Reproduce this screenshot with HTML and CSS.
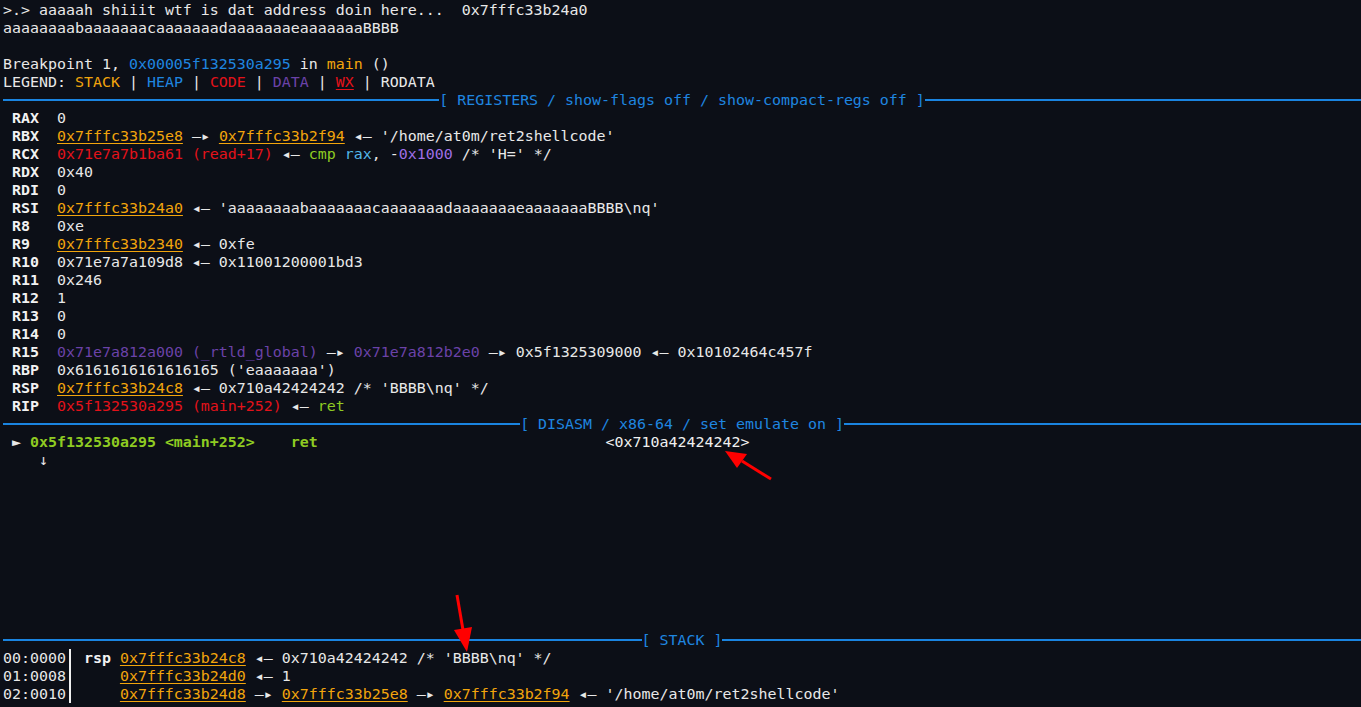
FILE: index.html
```html
<!DOCTYPE html>
<html lang="en">

<head>
    <meta charset="UTF-8">
    <meta name="viewport" content="width=device-width, initial-scale=1.0">
    <title>pwndbg</title>

    <link rel="stylesheet" href="styles.css">
</head>

<body>
    <div class="term">
        <div class="ln">&gt;.&gt; aaaaah shiiit wtf is dat address doin here...  0x7fffc33b24a0</div>
        <div class="ln">aaaaaaaabaaaaaaacaaaaaaadaaaaaaaeaaaaaaaBBBB</div>
        <div class="ln"> </div>
        <div class="ln">Breakpoint 1, <span class="c-blue">0x00005f132530a295</span> in <span class="c-orange">main</span> ()</div>
        <div class="ln">LEGEND: <span class="c-orange">STACK</span> | <span class="c-blue">HEAP</span> | <span class="c-red">CODE</span> | <span class="c-purple">DATA</span> | <span class="c-red u">WX</span> | RODATA</div>

        <div class="sep"><span class="sep-line"></span><span class="sep-title">[ REGISTERS / show-flags off / show-compact-regs off ]</span><span class="sep-line"></span></div>

        <!-- registers -->
        <div class="ln"> <b>RAX</b>  0</div>
        <div class="ln"> <b>RBX</b>  <span class="c-orange u">0x7fffc33b25e8</span> —▸ <span class="c-orange u">0x7fffc33b2f94</span> ◂— '/home/at0m/ret2shellcode'</div>
        <div class="ln"> <b>RCX</b>  <span class="c-red">0x71e7a7b1ba61 (read+17)</span> ◂— <span class="c-green">cmp</span> <span class="c-cyan">rax</span>, -<span class="c-violet">0x1000</span> /* 'H=' */</div>
        <div class="ln"> <b>RDX</b>  0x40</div>
        <div class="ln"> <b>RDI</b>  0</div>
        <div class="ln"> <b>RSI</b>  <span class="c-orange u">0x7fffc33b24a0</span> ◂— 'aaaaaaaabaaaaaaacaaaaaaadaaaaaaaeaaaaaaaBBBB\nq'</div>
        <div class="ln"> <b>R8 </b>  0xe</div>
        <div class="ln"> <b>R9 </b>  <span class="c-orange u">0x7fffc33b2340</span> ◂— 0xfe</div>
        <div class="ln"> <b>R10</b>  0x71e7a7a109d8 ◂— 0x11001200001bd3</div>
        <div class="ln"> <b>R11</b>  0x246</div>
        <div class="ln"> <b>R12</b>  1</div>
        <div class="ln"> <b>R13</b>  0</div>
        <div class="ln"> <b>R14</b>  0</div>
        <div class="ln"> <b>R15</b>  <span class="c-purple">0x71e7a812a000 (_rtld_global)</span> —▸ <span class="c-purple">0x71e7a812b2e0</span> —▸ 0x5f1325309000 ◂— 0x10102464c457f</div>
        <div class="ln"> <b>RBP</b>  0x6161616161616165 ('eaaaaaaa')</div>
        <div class="ln"> <b>RSP</b>  <span class="c-orange u">0x7fffc33b24c8</span> ◂— 0x710a42424242 /* 'BBBB\nq' */</div>
        <div class="ln"> <b>RIP</b>  <span class="c-red">0x5f132530a295 (main+252)</span> ◂— <span class="c-green">ret</span></div>

        <div class="sep"><span class="sep-line"></span><span class="sep-title">[ DISASM / x86-64 / set emulate on ]</span><span class="sep-line"></span></div>

        <!-- disasm -->
        <div class="ln"> ► <b class="c-green">0x5f132530a295 &lt;main+252&gt;    ret</b>                                <span class="c-white">&lt;0x710a42424242&gt;</span></div>
        <div class="ln">    ↓</div>
        <div class="ln"> </div>
        <div class="ln"> </div>
        <div class="ln"> </div>
        <div class="ln"> </div>
        <div class="ln"> </div>
        <div class="ln"> </div>
        <div class="ln"> </div>
        <div class="ln"> </div>
        <div class="ln"> </div>

        <div class="sep sep-stack"><span class="sep-line"></span><span class="sep-title">[ STACK ]</span><span class="sep-line"></span></div>

        <!-- stack -->
        <div class="ln">00:0000<span class="vbar"></span> <b>rsp</b> <span class="c-orange u">0x7fffc33b24c8</span> ◂— 0x710a42424242 /* 'BBBB\nq' */</div>
        <div class="ln">01:0008<span class="vbar"></span>     <span class="c-orange u">0x7fffc33b24d0</span> ◂— 1</div>
        <div class="ln">02:0010<span class="vbar"></span>     <span class="c-orange u">0x7fffc33b24d8</span> —▸ <span class="c-orange u">0x7fffc33b25e8</span> —▸ <span class="c-orange u">0x7fffc33b2f94</span> ◂— '/home/at0m/ret2shellcode'</div>
    </div>

    <!-- red annotation arrows -->
    <svg class="marks" width="1361" height="707" viewBox="0 0 1361 707">
        <line x1="771" y1="479" x2="742" y2="461" stroke="#ff0000" stroke-width="3" />
        <polygon points="725,451 747,454 737,468" fill="#ff0000" />
        <line x1="457" y1="595" x2="463" y2="630" stroke="#ff0000" stroke-width="3" />
        <polygon points="467,652 472,627 454,630" fill="#ff0000" />
    </svg>
</body>

</html>
```

FILE: styles.css
```css
html,
body {
    margin: 0;
    height: 100%;
    overflow: hidden;
    background-color: #0c0f17;
}

body {
    position: relative;
}

.term {
    padding: 1px 0 0 3px;
    color: #e8e8e8;
    font-family: 'DejaVu Sans Mono', 'Liberation Mono', monospace;
    font-size: 14.95px;
    line-height: 18px;
}

.ln {
    height: 18px;
    white-space: pre;
}

b {
    font-weight: bold;
    color: #f2f2f2;
}

.c-blue {
    color: #1f86e0;
}

.c-orange {
    color: #f2a50c;
}

.c-red {
    color: #e3121a;
}

.c-purple {
    color: #6b42a8;
}

.c-green,
b.c-green {
    color: #8fcb22;
}

.c-cyan {
    color: #52b6e8;
}

.c-violet {
    color: #9f6ee6;
}

.c-white {
    color: #f0f0f0;
}

.u {
    text-decoration: underline;
    text-underline-offset: 2px;
}

.sep {
    display: flex;
    align-items: center;
    height: 18px;
}

.sep-line {
    flex: 1;
    height: 2px;
    background-color: #1a84e0;
}

.sep-title {
    color: #1f86e0;
    white-space: pre;
}

.vbar {
    display: inline-block;
    width: 1ch;
    height: 18px;
    vertical-align: top;
    background: linear-gradient(90deg, transparent 3px, #f0f0f0 3px, #f0f0f0 5px, transparent 5px);
}

.marks {
    position: absolute;
    top: 0;
    left: 0;
    pointer-events: none;
}
```
